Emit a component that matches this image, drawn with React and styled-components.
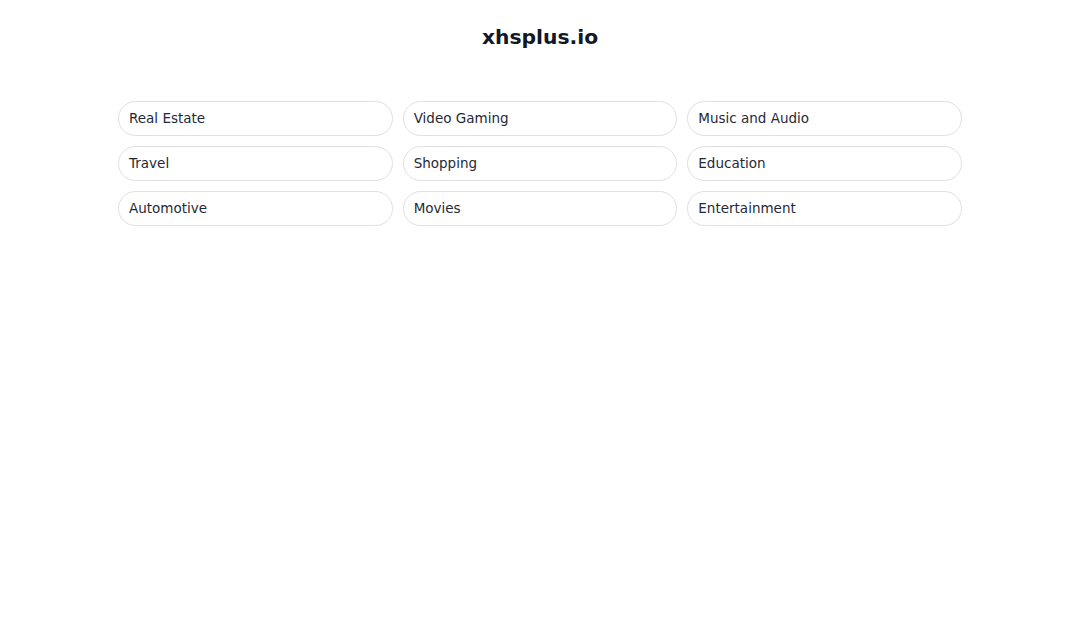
import React from "react";
import styled, { createGlobalStyle } from "styled-components";

const categories = [
  "Real Estate",
  "Video Gaming",
  "Music and Audio",
  "Travel",
  "Shopping",
  "Education",
  "Automotive",
  "Movies",
  "Entertainment",
];

export default function App() {
  return (
    <>
      <GlobalStyle />
      <Page>
        <Title>xhsplus.io</Title>
        <Grid>
          {categories.map((c) => (
            <Pill key={c} href="#">
              {c}
            </Pill>
          ))}
        </Grid>
      </Page>
    </>
  );
}

const GlobalStyle = createGlobalStyle`
  body {
    margin: 0;
    background: #fff;
    font-family: "DejaVu Sans", "Noto Sans", sans-serif;
  }
`;

const Page = styled.main`
  width: 844px;
  margin: 0 auto;
  padding-top: 24px;
`;

const Title = styled.h1`
  margin: 0 0 51px;
  text-align: center;
  font-size: 20.3px;
  line-height: 26px;
  font-weight: bold;
  color: #111827;
`;

const Grid = styled.div`
  display: grid;
  grid-template-columns: repeat(3, 1fr);
  gap: 10px;
`;

const Pill = styled.a`
  display: flex;
  align-items: center;
  height: 35px;
  box-sizing: border-box;
  padding: 0 10px 2px;
  border: 1px solid #e0e0e3;
  border-radius: 18px;
  font-size: 13.5px;
  color: #1f2937;
  text-decoration: none;
`;
